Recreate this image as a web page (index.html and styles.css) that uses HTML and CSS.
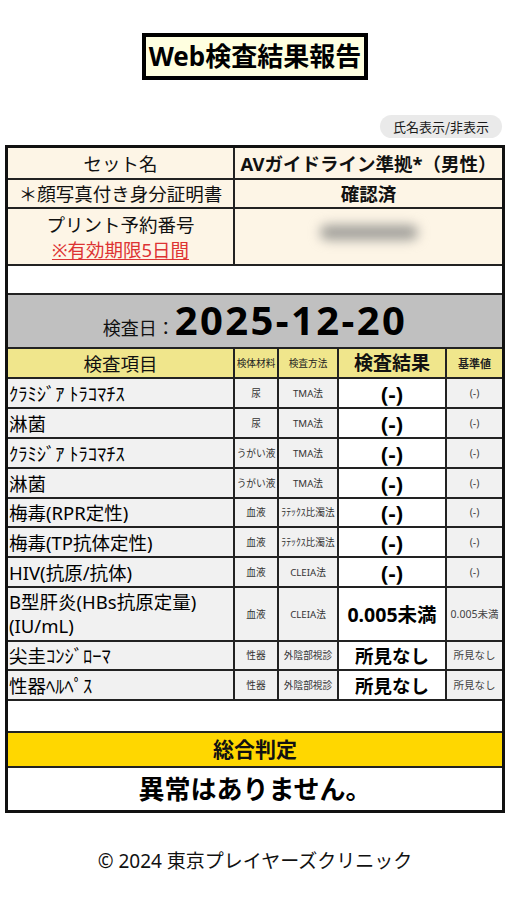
FILE: index.html
```html
<!DOCTYPE html>
<html lang="ja">
<head>
<meta charset="utf-8">
<title>Web検査結果報告</title>
<link rel="stylesheet" href="styles.css">
</head>
<body>
<div class="page">
  <h1 class="title">Web検査結果報告</h1>
  <div class="toolbar"><button class="toggle" type="button">氏名表示/非表示</button></div>
  <table class="report">
    <colgroup>
      <col class="c-item"><col class="c-spec"><col class="c-method"><col class="c-result"><col class="c-ref">
    </colgroup>
    <tbody>
      <tr class="row-set info">
        <td>セット名</td>
        <td colspan="4" class="strong">AVガイドライン準拠*（男性）</td>
      </tr>
      <tr class="row-id info">
        <td>＊顔写真付き身分証明書</td>
        <td colspan="4" class="strong">確認済</td>
      </tr>
      <tr class="row-print info">
        <td class="multi">プリント予約番号<br><span class="warn">※有効期限5日間</span></td>
        <td colspan="4"><span class="blurred"></span></td>
      </tr>
      <tr class="row-spacer"><td colspan="5"></td></tr>
      <tr class="row-date">
        <td colspan="5" class="date-cell"><span class="date-label">検査日：</span><span class="date-value">2025-12-20</span></td>
      </tr>
      <tr class="row-head">
        <td class="h-item">検査項目</td>
        <td class="h-small">検体材料</td>
        <td class="h-small">検査方法</td>
        <td class="h-result">検査結果</td>
        <td class="h-ref">基準値</td>
      </tr>
      <tr class="row-test">
        <td class="item">ｸﾗﾐｼﾞｱ ﾄﾗｺﾏﾁｽ</td><td class="small">尿</td><td class="small">TMA法</td><td class="result">(-)</td><td class="ref">(-)</td>
      </tr>
      <tr class="row-test">
        <td class="item">淋菌</td><td class="small">尿</td><td class="small">TMA法</td><td class="result">(-)</td><td class="ref">(-)</td>
      </tr>
      <tr class="row-test">
        <td class="item">ｸﾗﾐｼﾞｱ ﾄﾗｺﾏﾁｽ</td><td class="small">うがい液</td><td class="small">TMA法</td><td class="result">(-)</td><td class="ref">(-)</td>
      </tr>
      <tr class="row-test">
        <td class="item">淋菌</td><td class="small">うがい液</td><td class="small">TMA法</td><td class="result">(-)</td><td class="ref">(-)</td>
      </tr>
      <tr class="row-test short">
        <td class="item">梅毒(RPR定性)</td><td class="small">血液</td><td class="small">ﾗﾃｯｸｽ比濁法</td><td class="result">(-)</td><td class="ref">(-)</td>
      </tr>
      <tr class="row-test">
        <td class="item">梅毒(TP抗体定性)</td><td class="small">血液</td><td class="small">ﾗﾃｯｸｽ比濁法</td><td class="result">(-)</td><td class="ref">(-)</td>
      </tr>
      <tr class="row-test">
        <td class="item">HIV(抗原/抗体)</td><td class="small">血液</td><td class="small">CLEIA法</td><td class="result">(-)</td><td class="ref">(-)</td>
      </tr>
      <tr class="row-test tall">
        <td class="item multi">B型肝炎(HBs抗原定量)<br>(IU/mL)</td><td class="small">血液</td><td class="small">CLEIA法</td><td class="result num">0.005未満</td><td class="ref">0.005未満</td>
      </tr>
      <tr class="row-test short">
        <td class="item">尖圭ｺﾝｼﾞﾛｰﾏ</td><td class="small">性器</td><td class="small">外陰部視診</td><td class="result text">所見なし</td><td class="ref">所見なし</td>
      </tr>
      <tr class="row-test">
        <td class="item">性器ﾍﾙﾍﾟｽ</td><td class="small">性器</td><td class="small">外陰部視診</td><td class="result text">所見なし</td><td class="ref">所見なし</td>
      </tr>
      <tr class="row-gap"><td colspan="5"></td></tr>
      <tr class="row-verdict-head"><td colspan="5">総合判定</td></tr>
      <tr class="row-verdict"><td colspan="5">異常はありません。</td></tr>
    </tbody>
  </table>
  <footer class="footer">© 2024 東京プレイヤーズクリニック</footer>
</div>
</body>
</html>
```

FILE: styles.css
```css
* { box-sizing: border-box; }

body {
  margin: 0;
  background: #ffffff;
  color: #111111;
  font-family: "Noto Sans", "Noto Sans CJK JP", sans-serif;
}

.page {
  width: 510px;
  padding-top: 33px;
}

.title {
  display: table;
  margin: 0 auto;
  padding: 0 3px;
  border: 4px solid #000000;
  background: #ffffe0;
  font-size: 26px;
  font-weight: 700;
  line-height: 39px;
  color: #000000;
}

.toolbar {
  display: flex;
  justify-content: flex-end;
  margin-top: 35px;
  padding-right: 8px;
}

.toggle {
  height: 23px;
  padding: 0 13px;
  border: 0;
  border-radius: 12px;
  background: #eaeaea;
  color: #1a1a1a;
  font-family: "Noto Sans CJK JP", sans-serif;
  font-size: 13px;
  line-height: 23px;
}

.report {
  margin: 7px 5px 0;
  width: 500px;
  border: 3px solid #111111;
  border-collapse: separate;
  border-spacing: 0;
  table-layout: fixed;
}

.c-item { width: 227px; }
.c-spec { width: 44px; }
.c-method { width: 60px; }
.c-result { width: 108px; }
.c-ref { width: 55px; }

.report td {
  padding: 0;
  border-right: 2px solid #222222;
  border-bottom: 2px solid #222222;
  text-align: center;
  vertical-align: middle;
  white-space: nowrap;
  font-size: 18.5px;
  line-height: 25px;
}

.report td:last-child { border-right: 0; }
.report tr:last-child td { border-bottom: 0; }

.info td { background: #fdf5e6; }
.strong { font-weight: 700; }

.row-set { height: 32px; }
.row-id { height: 29px; }
.row-print { height: 57px; }
.row-spacer { height: 29px; }
.row-date { height: 54px; }
.row-head { height: 30px; }
.row-test { height: 30px; }
.row-test.short { height: 29px; }
.row-test.tall { height: 54px; }
.row-gap { height: 32px; }
.row-verdict-head { height: 35px; }
.row-verdict { height: 42px; }

.multi { line-height: 25px; }

.warn {
  color: #dd3333;
  text-decoration: underline;
  text-underline-offset: 2px;
}

.blurred {
  display: inline-block;
  width: 98px;
  height: 15px;
  margin-bottom: 11px;
  border-radius: 8px;
  background: #a09f9a;
  filter: blur(6px);
  vertical-align: middle;
}

.row-spacer td, .row-gap td { background: #ffffff; }

.report td.date-cell {
  background: #c0c0c0;
  vertical-align: bottom;
  padding-bottom: 7px;
  line-height: 1;
}

.date-label {
  font-size: 18px;
  color: #111111;
}

.date-value {
  font-size: 40px;
  font-weight: 700;
  letter-spacing: 2.4px;
  color: #000000;
}

.row-head td { background: #f0e68c; }
.report td.h-small { font-size: 9.7px; color: #222222; }
.report td.h-result { font-size: 19px; font-weight: 700; }
.report td.h-ref { font-size: 11px; font-weight: 700; color: #222222; }

.row-test td { background: #f1f1f1; }
.row-test td.result { background: #ffffff; }

.report td.item {
  text-align: left;
  padding-left: 1px;
  color: #000000;
}

.report td.item.multi { line-height: 24px; }

.report td.small {
  font-size: 9.7px;
  color: #333333;
}

.report td.result {
  font-size: 22px;
  font-weight: 700;
  color: #000000;
}

.report td.result.num { font-size: 19.5px; }
.report td.result.text { font-size: 18.5px; }

.report td.ref {
  font-size: 10.5px;
  color: #444444;
}

.row-verdict-head td {
  background: #ffd700;
  font-weight: 700;
}

.report .row-verdict-head td { font-size: 21px; }

.report .row-verdict td {
  background: #ffffff;
  font-size: 26px;
  font-weight: 700;
  color: #000000;
}

.footer {
  margin-top: 35px;
  text-align: center;
  font-family: "Noto Sans", "Noto Sans CJK JP", sans-serif;
  font-size: 19px;
  line-height: 27px;
  color: #111111;
}
```
